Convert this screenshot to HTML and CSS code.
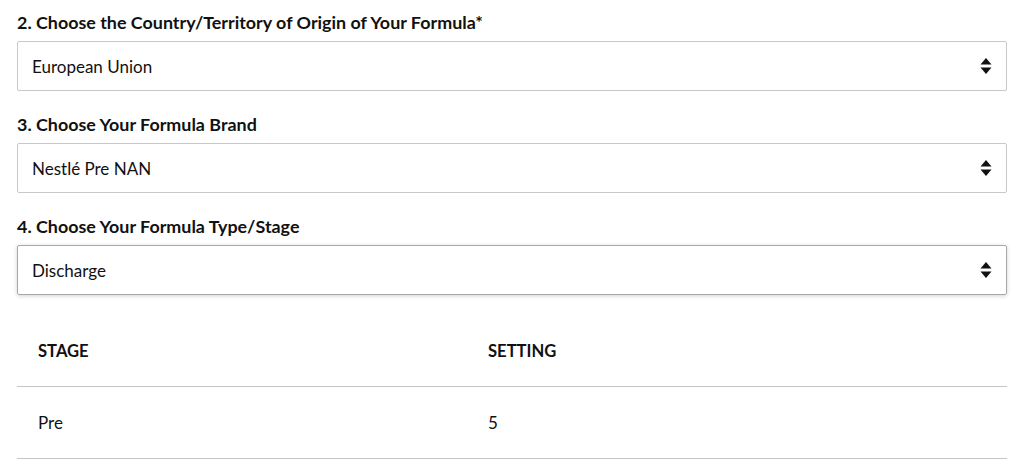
FILE: index.html
```html
<html>
<head>
    <link rel="stylesheet" href="styles.css">
</head>
<body>
    <div class="form-wrap">
        <div class="field">
            <label class="field-label">2. Choose the Country/Territory of Origin of Your Formula*</label>
            <div class="select-box">
                <span class="select-value">European Union</span>
                <svg class="select-arrow" width="12" height="18" viewBox="0 0 12 18">
                    <path d="M6 1 L11.5 7.5 L0.5 7.5 Z" fill="#111"/>
                    <path d="M6 17 L11.5 10.5 L0.5 10.5 Z" fill="#111"/>
                </svg>
            </div>
        </div>
        <div class="field">
            <label class="field-label">3. Choose Your Formula Brand</label>
            <div class="select-box">
                <span class="select-value">Nestlé Pre NAN</span>
                <svg class="select-arrow" width="12" height="18" viewBox="0 0 12 18">
                    <path d="M6 1 L11.5 7.5 L0.5 7.5 Z" fill="#111"/>
                    <path d="M6 17 L11.5 10.5 L0.5 10.5 Z" fill="#111"/>
                </svg>
            </div>
        </div>
        <div class="field">
            <label class="field-label">4. Choose Your Formula Type/Stage</label>
            <div class="select-box active">
                <span class="select-value">Discharge</span>
                <svg class="select-arrow" width="12" height="18" viewBox="0 0 12 18">
                    <path d="M6 1 L11.5 7.5 L0.5 7.5 Z" fill="#111"/>
                    <path d="M6 17 L11.5 10.5 L0.5 10.5 Z" fill="#111"/>
                </svg>
            </div>
        </div>

        <table class="settings-table">
            <thead>
                <tr>
                    <th class="col-stage">STAGE</th>
                    <th>SETTING</th>
                </tr>
            </thead>
            <tbody>
                <tr>
                    <td>Pre</td>
                    <td>5</td>
                </tr>
            </tbody>
        </table>
    </div>
</body>
</html>
```

FILE: styles.css
```css
body {
    margin: 0;
    background-color: #ffffff;
    font-family: Lato, "Open Sans", sans-serif;
    color: #111;
}
.form-wrap {
    padding: 11px 20px 0 17px;
}
.field {
    margin-bottom: 22px;
}
.field-label {
    display: block;
    font-size: 17.9px;
    font-weight: 700;
    line-height: 22px;
    margin-bottom: 8px;
}
.select-box {
    height: 48px;
    border: 1px solid #c8c8c8;
    border-radius: 2px;
    display: flex;
    align-items: center;
    justify-content: space-between;
    padding: 0 14px 0 14px;
    font-size: 17px;
}
.select-box.active {
    border-color: #a8a8a8;
    box-shadow: 0 1px 4px rgba(0, 0, 0, 0.18);
}
.settings-table {
    width: 100%;
    border-collapse: collapse;
    margin-top: 0;
}
.settings-table th,
.settings-table td {
    text-align: left;
    padding: 0 21px;
    font-size: 17px;
    border-bottom: 1px solid #c4c4c4;
}
.settings-table th {
    font-size: 16.6px;
    font-weight: 700;
    height: 69px;
}
.settings-table td {
    height: 72px;
}
.col-stage {
    width: 408px;
}
```
